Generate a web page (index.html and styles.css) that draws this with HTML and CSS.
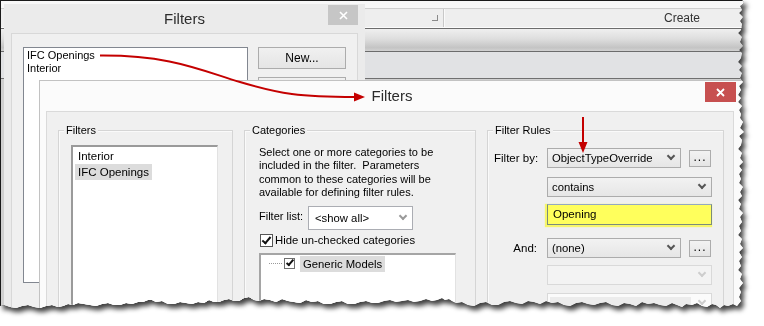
FILE: index.html
```html
<!DOCTYPE html>
<html lang="en">
<head>
    <meta charset="UTF-8">
    <title>Filters</title>
    <link rel="stylesheet" href="styles.css">
</head>
<body>
<div class="torn">
    <div class="shot">
        <!-- application behind the dialogs -->
        <div class="app">
            <div class="app-top"></div>
            <div class="app-labels">
                <div class="app-panel"><span class="launcher"></span></div>
                <div class="app-panel create">Create</div>
            </div>
            <div class="app-toolbar"></div>
            <div class="app-strip"></div>
            <div class="app-rest"></div>
        </div>

        <!-- old filters dialog -->
        <div class="win old">
            <div class="old-title">
                <span></span>
                <span class="title-text">Filters</span>
                <span class="old-close">
                    <svg width="9" height="9" viewBox="0 0 9 9"><path d="M1 1L8 8M8 1L1 8" stroke="#fff" stroke-width="1.6"/></svg>
                </span>
            </div>
            <div class="old-body">
                <div class="old-list">
                    <div>IFC Openings</div>
                    <div>Interior</div>
                </div>
                <div class="old-buttons">
                    <div class="btn">New...</div>
                    <div class="btn"></div>
                </div>
            </div>
        </div>

        <!-- new filters dialog -->
        <div class="win new">
            <div class="new-title">
                <span></span>
                <span class="title-text">Filters</span>
                <span class="new-close">
                    <svg width="9" height="9" viewBox="0 0 9 9"><path d="M1 1L8 8M8 1L1 8" stroke="#fff" stroke-width="1.8"/></svg>
                </span>
            </div>
            <div class="new-body">
                <div class="group g-filters">
                    <span class="group-title">Filters</span>
                    <div class="list">
                        <div class="item">Interior</div>
                        <div class="item sel">IFC Openings</div>
                    </div>
                </div>

                <div class="group g-cats">
                    <span class="group-title">Categories</span>
                    <p class="hint">Select one or more categories to be<br>included in the filter.&nbsp; Parameters<br>common to these categories will be<br>available for defining filter rules.</p>
                    <div class="filter-list">
                        <span class="fl-label">Filter list:</span>
                        <div class="combo white">&lt;show all&gt;<span class="chev light"></span></div>
                    </div>
                    <div class="check-row">
                        <span class="check"><span class="tick"></span></span>
                        <span>Hide un-checked categories</span>
                    </div>
                    <div class="tree">
                        <div class="tree-item">
                            <span class="dots"></span>
                            <span class="check small"><span class="tick"></span></span>
                            <span class="tree-label">Generic Models</span>
                        </div>
                    </div>
                </div>

                <div class="group g-rules">
                    <span class="group-title">Filter Rules</span>
                    <div class="rule-row r1">
                        <span class="rule-label">Filter by:</span>
                        <div class="combo">ObjectTypeOverride<span class="chev"></span></div>
                        <div class="dots-btn">...</div>
                    </div>
                    <div class="rule-row r2">
                        <span class="rule-label"></span>
                        <div class="combo wide">contains<span class="chev"></span></div>
                    </div>
                    <div class="rule-row r3">
                        <span class="rule-label"></span>
                        <div class="value">Opening</div>
                    </div>
                    <div class="rule-row r4">
                        <span class="rule-label right">And:</span>
                        <div class="combo">(none)<span class="chev"></span></div>
                        <div class="dots-btn">...</div>
                    </div>
                    <div class="rule-row r5">
                        <span class="rule-label"></span>
                        <div class="combo wide off"><span class="chev"></span></div>
                    </div>
                    <div class="rule-row r6">
                        <span class="rule-label"></span>
                        <div class="combo wide off edit"><span class="fill"></span><span class="chev"></span></div>
                    </div>
                </div>
            </div>
        </div>

        <!-- red callout arrows -->
        <svg class="arrows" width="750" height="315" viewBox="0 0 750 315">
            <path d="M100 55.5C170 55 200 70 240 82S300 97 355 97" fill="none" stroke="#c40000" stroke-width="2"/>
            <path d="M365 97L354 92.5L354 101.5Z" fill="#c40000"/>
            <path d="M583 117V144" stroke="#c40000" stroke-width="2"/>
            <path d="M583 153L578.5 142L587.5 142Z" fill="#c40000"/>
        </svg>
    </div>
</div>
</body>
</html>
```

FILE: styles.css
```css
body {
    margin: 0;
    background-color: #ffffff;
    font-family: 'Liberation Sans', Arial, sans-serif;
    font-size: 11px;
    color: #000;
}

.torn {
    width: 764px;
    height: 326px;
    filter: drop-shadow(0 0 0.7px #000) drop-shadow(3px 4px 2.5px rgba(0, 0, 0, 0.75));
}

.shot {
    position: relative;
    width: 750px;
    height: 315px;
    overflow: hidden;
    background-color: #d4d4d4;
    clip-path: polygon(0 0, 742px 0, 744px 3px, 740px 6px, 742px 10px, 739px 13px, 743px 17px, 740px 21px, 742px 24px, 741px 30px, 738px 33px, 742px 37px, 740px 42px, 743px 46px, 739px 50px, 742px 53px, 741px 58px, 738px 62px, 742px 66px, 739px 70px, 742px 73px, 740px 78px, 743px 82px, 739px 86px, 741px 90px, 738px 95px, 741px 98px, 738px 102px, 742px 106px, 739px 110px, 741px 114px, 740px 118px, 743px 122px, 740px 128px, 744px 132px, 739px 136px, 742px 140px, 741px 145px, 738px 149px, 742px 153px, 740px 158px, 743px 162px, 739px 166px, 742px 170px, 739px 174px, 741px 179px, 739px 183px, 743px 187px, 740px 192px, 742px 196px, 738px 200px, 741px 204px, 739px 209px, 743px 213px, 740px 217px, 742px 222px, 739px 226px, 741px 231px, 738px 235px, 742px 239px, 740px 244px, 743px 248px, 739px 252px, 742px 257px, 739px 261px, 741px 266px, 738px 270px, 742px 274px, 740px 279px, 743px 283px, 739px 288px, 741px 292px, 739px 297px, 741px 301px, 737px 306px, 733px 304px, 728px 306px, 724px 305px, 720px 308px, 716px 305px, 712px 304px, 707px 307px, 702px 306px, 697px 303px, 692px 305px, 686px 304px, 682px 307px, 677px 305px, 672px 303px, 666px 306px, 660px 305px, 654px 303px, 648px 304px, 642px 302px, 636px 306px, 630px 304px, 624px 303px, 618px 306px, 612px 305px, 606px 302px, 600px 303px, 594px 305px, 588px 304px, 582px 302px, 576px 303px, 570px 306px, 564px 305px, 558px 302px, 552px 303px, 546px 301px, 540px 304px, 534px 302px, 528px 301px, 522px 304px, 516px 303px, 510px 301px, 504px 302px, 498px 305px, 492px 305px, 486px 302px, 480px 303px, 474px 306px, 468px 305px, 462px 302px, 456px 303px, 452px 301px, 449px 299px, 445px 300px, 442px 298px, 437px 300px, 432px 301px, 426px 299px, 420px 301px, 414px 302px, 408px 300px, 402px 301px, 396px 302px, 390px 300px, 384px 301px, 378px 303px, 372px 303px, 366px 301px, 360px 302px, 354px 304px, 348px 304px, 342px 301px, 336px 302px, 330px 304px, 324px 304px, 318px 301px, 312px 302px, 306px 300px, 300px 303px, 294px 302px, 288px 301px, 282px 299px, 276px 302px, 270px 300px, 264px 299px, 259px 301px, 254px 300px, 249px 297px, 244px 298px, 239px 301px, 234px 301px, 229px 299px, 224px 300px, 219px 302px, 214px 302px, 209px 300px, 204px 303px, 198px 302px, 192px 304px, 186px 303px, 180px 302px, 174px 304px, 168px 304px, 162px 301px, 156px 302px, 152px 300px, 148px 300px, 143px 302px, 138px 302px, 132px 304px, 126px 303px, 120px 305px, 114px 305px, 108px 303px, 102px 304px, 96px 306px, 90px 305px, 84px 304px, 78px 303px, 73px 305px, 68px 304px, 63px 306px, 58px 307px, 52px 305px, 46px 306px, 40px 308px, 34px 307px, 28px 305px, 22px 306px, 16px 308px, 10px 307px, 4px 305px, 0 306px);
}

.shot::after {
    content: "";
    position: absolute;
    inset: 0;
    border-top: 1px solid #1a1a1a;
    border-left: 1px solid #1a1a1a;
    pointer-events: none;
}

/* application in the background */
.app {
    position: absolute;
    inset: 0;
    display: flex;
    flex-direction: column;
}

.app-top {
    height: 8px;
    background-color: #f8f8f8;
    border-bottom: 1px solid #cfcfcf;
}

.app-labels {
    height: 18px;
    display: flex;
    background-color: #eeeeee;
    border-bottom: 1px solid #fbfbfb;
    font-size: 12px;
    color: #333;
}

.app-panel {
    width: 443px;
    display: flex;
    align-items: center;
    justify-content: flex-end;
    border-right: 1px solid #c8c8c8;
    box-shadow: 1px 0 0 #fafafa;
}

.app-panel.create {
    width: auto;
    flex: 1;
    justify-content: flex-start;
    padding-left: 220px;
    border-right: none;
    box-shadow: none;
}

.launcher {
    width: 5px;
    height: 5px;
    margin-right: 5px;
    border-right: 1px solid #8a8a8a;
    border-bottom: 1px solid #8a8a8a;
}

.app-toolbar {
    height: 22px;
    border-top: 1px solid #6c6c6c;
    border-bottom: 1px solid #6c6c6c;
    background: linear-gradient(#efefef, #dedede 45%, #c4c4c4 85%, #d2d2d2);
}

.app-strip {
    height: 26px;
    background-color: #e1e2e4;
    border-bottom: 1px solid #707070;
}

.app-rest {
    flex: 1;
    background-color: #d0d0d0;
}

/* dialog windows */
.win {
    position: absolute;
    box-sizing: border-box;
}

.title-text {
    font-size: 15px;
    color: #2b2b2b;
    text-align: center;
}

.old {
    left: 4px;
    top: 4px;
    width: 361px;
    height: 330px;
    background-color: #ebebeb;
}

.old-title {
    height: 29px;
    display: grid;
    grid-template-columns: 1fr auto 1fr;
    line-height: 29px;
}

.old-close {
    justify-self: end;
    width: 30px;
    height: 20px;
    margin: 1px 7px 0 0;
    background-color: #c6c6c6;
    display: flex;
    align-items: center;
    justify-content: center;
}

.old-body {
    margin-left: 7px;
    width: 347px;
    height: 300px;
    box-sizing: border-box;
    border: 1px solid #d8d8d8;
    background-color: #f0f0f0;
    padding: 13px 0 0 11px;
    display: flex;
    align-items: flex-start;
    gap: 10px;
}

.old-list {
    width: 225px;
    height: 236px;
    box-sizing: border-box;
    border: 1px solid #828790;
    background-color: #fff;
    padding: 1px 3px;
    line-height: 13px;
}

.old-buttons {
    display: flex;
    flex-direction: column;
    gap: 8px;
}

.btn {
    width: 88px;
    height: 22px;
    box-sizing: border-box;
    border: 1px solid #acacac;
    background: linear-gradient(#f0f0f0, #e5e5e5);
    display: flex;
    align-items: center;
    justify-content: center;
    font-size: 12px;
}

.new {
    left: 39px;
    top: 80px;
    width: 706px;
    height: 240px;
    background-color: #fbfbfb;
    border: 1px solid #c2c2c2;
}

.new-title {
    height: 30px;
    display: grid;
    grid-template-columns: 1fr auto 1fr;
    line-height: 30px;
}

.new-close {
    justify-self: end;
    width: 31px;
    height: 20px;
    margin: 1px 8px 0 0;
    background-color: #c75050;
    display: flex;
    align-items: center;
    justify-content: center;
}

.new-body {
    margin-left: 6px;
    width: 688px;
    height: 220px;
    box-sizing: border-box;
    border: 1px solid #dadada;
    background-color: #f0f0f0;
    padding: 18px 9px 0 11px;
    display: flex;
    gap: 11px;
}

/* group boxes */
.group {
    position: relative;
    height: 200px;
    box-sizing: border-box;
    border: 1px solid #d5d5d5;
    box-shadow: inset 1px 1px 0 #fafafa;
}

.group-title {
    position: absolute;
    top: -7px;
    left: 5px;
    padding: 0 2px;
    background-color: #f0f0f0;
    line-height: 13px;
}

.g-filters {
    width: 175px;
    padding: 14px 0 0 12px;
}

.g-cats {
    width: 232px;
    padding: 15px 0 0 14px;
}

.g-rules {
    width: 237px;
    padding: 17px 0 0 5px;
}

.list {
    width: 147px;
    height: 180px;
    box-sizing: border-box;
    border-style: solid;
    border-width: 2px 1px 1px 2px;
    border-color: #9a9a9a #e2e2e2 #e2e2e2 #9a9a9a;
    background-color: #fff;
    padding: 1px 0 0 2px;
    display: flex;
    flex-direction: column;
    align-items: flex-start;
}

.item {
    height: 16px;
    line-height: 16px;
    padding: 0 3px;
    font-size: 11.5px;
}

.item.sel,
.tree-label {
    background-color: #dcdcdc;
}

.hint {
    margin: 0;
    line-height: 13.4px;
}

.filter-list {
    margin-top: 6px;
    display: flex;
    align-items: center;
}

.fl-label {
    width: 49px;
    margin-top: -3px;
}

/* combo boxes */
.combo {
    width: 134px;
    height: 20px;
    box-sizing: border-box;
    border: 1px solid #acacac;
    background: linear-gradient(#f2f2f2, #e6e6e6);
    padding: 0 0 0 4px;
    display: flex;
    align-items: center;
    font-size: 11.3px;
}

.combo.white {
    width: 105px;
    height: 24px;
    background: #fff;
    border-color: #abadb3;
    padding-left: 6px;
}

.combo.wide {
    width: 165px;
}

.combo.off {
    background: #f3f3f3;
    border-color: #d9d9d9;
}

.combo.edit {
    background: #fbfbfb;
    padding-left: 2px;
}

.fill {
    width: 141px;
    height: 16px;
    margin-top: 4px;
    background-color: #ececec;
}

.chev {
    margin-left: auto;
    margin-right: 6px;
    margin-top: -4px;
    width: 4px;
    height: 4px;
    border-right: 2px solid #555;
    border-bottom: 2px solid #555;
    transform: rotate(45deg);
}

.chev.light {
    border-color: #9a9a9a;
}

.combo.off .chev {
    border-color: #cdcdcd;
}

.check-row {
    margin-top: 4px;
    margin-left: 1px;
    display: flex;
    align-items: center;
    gap: 2px;
    font-size: 11.3px;
}

.check {
    width: 13px;
    height: 13px;
    box-sizing: border-box;
    border: 1px solid #555;
    background-color: #fff;
    display: flex;
    justify-content: center;
}

.tick {
    width: 3px;
    height: 7px;
    margin-top: 0;
    border-right: 2px solid #111;
    border-bottom: 2px solid #111;
    transform: rotate(40deg);
}

.check.small {
    width: 11px;
    height: 11px;
    border-color: #6f6f6f;
}

.check.small .tick {
    width: 2px;
    height: 6px;
    margin-top: -1px;
}

.tree {
    margin-top: 6px;
    width: 197px;
    height: 60px;
    box-sizing: border-box;
    border-style: solid;
    border-width: 2px 1px 1px 2px;
    border-color: #a5a5a5 #e2e2e2 #e2e2e2 #a5a5a5;
    background-color: #fff;
    padding-top: 1px;
}

.tree-item {
    height: 16px;
    display: flex;
    align-items: center;
    font-size: 11.3px;
}

.dots {
    width: 13px;
    margin-left: 8px;
    border-top: 1px dotted #9a9a9a;
}

.check.small {
    margin-left: 2px;
    margin-right: 5px;
}

.tree-label {
    height: 16px;
    line-height: 16px;
    padding: 0 3px;
}

/* filter rules */
.rule-row {
    display: flex;
    align-items: center;
}

.rule-label {
    width: 47px;
    margin-right: 7px;
    padding-left: 1px;
    box-sizing: border-box;
    font-size: 11.5px;
}

.rule-label.right {
    text-align: right;
    padding-right: 3px;
}

.dots-btn {
    width: 22px;
    height: 17px;
    margin-left: 8px;
    box-sizing: border-box;
    border: 1px solid #acacac;
    background: linear-gradient(#f2f2f2, #e5e5e5);
    text-align: center;
    line-height: 13px;
    font-size: 12px;
    letter-spacing: 1px;
}

.r2 { margin-top: 9px; }
.r3 { margin-top: 7px; }
.r4 { margin-top: 13px; }
.r5 { margin-top: 7px; }
.r6 { margin-top: 8px; }

.value {
    width: 165px;
    height: 21px;
    box-sizing: border-box;
    border: 1px solid #7b8c7b;
    border-top-color: #94a9c4;
    background-color: #ffff5c;
    box-shadow: -1px 1px 1px 1px #f6f66a;
    padding-left: 5px;
    line-height: 19px;
    font-size: 11.5px;
}

.arrows {
    position: absolute;
    left: 0;
    top: 0;
}
```
